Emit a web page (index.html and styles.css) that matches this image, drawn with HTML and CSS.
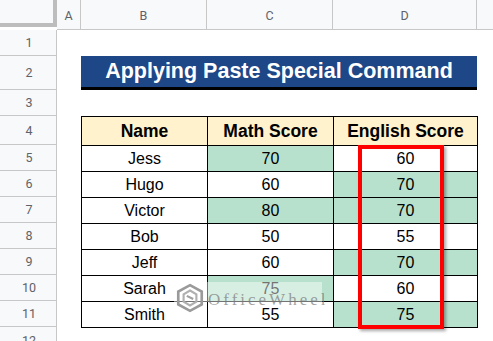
FILE: index.html
```html
<!DOCTYPE html>
<html>
<head>
<meta charset="utf-8">
<link rel="stylesheet" href="styles.css">
</head>
<body>
<div class="sheet">
  <div class="corner"></div>
  <div class="colh">A</div>
  <div class="colh">B</div>
  <div class="colh">C</div>
  <div class="colh">D</div>
  <div class="colh last"></div>

  <div class="rowh r1">1</div>
  <div class="rowh r2">2</div>
  <div class="rowh r3">3</div>
  <div class="rowh r4">4</div>
  <div class="rowh r5">5</div>
  <div class="rowh r6">6</div>
  <div class="rowh r7">7</div>
  <div class="rowh r8">8</div>
  <div class="rowh r9">9</div>
  <div class="rowh r10">10</div>
  <div class="rowh r11">11</div>
  <div class="rowh r12">12</div>

  <div class="title">Applying Paste Special Command</div>

  <div class="tablewrap">
    <table class="data">
      <colgroup><col class="cb"><col class="cc"><col class="cd"></colgroup>
      <tr class="head"><th>Name</th><th>Math Score</th><th>English Score</th></tr>
      <tr><td>Jess</td><td class="g">70</td><td>60</td></tr>
      <tr><td>Hugo</td><td>60</td><td class="g">70</td></tr>
      <tr><td>Victor</td><td class="g">80</td><td class="g">70</td></tr>
      <tr><td>Bob</td><td>50</td><td>55</td></tr>
      <tr><td>Jeff</td><td>60</td><td class="g">70</td></tr>
      <tr><td>Sarah</td><td class="g">75</td><td>60</td></tr>
      <tr><td>Smith</td><td>55</td><td class="g">75</td></tr>
    </table>
    <div class="highlight"></div>
    <div class="watermark">
      <svg class="logo" width="32" height="30" viewBox="0 0 30 28">
        <path d="M15 2 L26 8 L26 20 L15 26 L4 20 L4 8 Z" fill="none" stroke="#9a9a9a" stroke-width="2.5"/>
        <path d="M15 7 L21 10.5 L21 17.5 L15 21 L9 17.5 L9 10.5 Z" fill="none" stroke="#b0b0b0" stroke-width="2"/>
        <path d="M12 12 L18 15" stroke="#a0a0a0" stroke-width="2"/>
      </svg>
      <span class="wmtext">OfficeWheel</span>
    </div>
  </div>
</div>
</body>
</html>
```

FILE: styles.css
```css
html, body {
  margin: 0;
  padding: 0;
  background: #ffffff;
}
.sheet {
  width: 493px;
  height: 341px;
  overflow: hidden;
  display: grid;
  grid-template-columns: 57px 24px 126px 126px 144px 1fr;
  grid-template-rows: 30px 26px 34px 26px 29px 26px 26px 26px 26px 26px 26px 26px 1fr;
  font-family: "Liberation Sans", Arial, sans-serif;
}
.corner {
  background: #f8f9fa;
  border-right: 4px solid #bdbdbd;
  border-bottom: 4px solid #bdbdbd;
  box-sizing: border-box;
  height: 27px;
  width: 57px;
}
.colh {
  background: #f8f9fa;
  border-right: 1px solid #c7c7c7;
  border-bottom: 1px solid #c7c7c7;
  color: #5f6368;
  font-family: Roboto, "Liberation Sans", sans-serif;
  font-size: 12.5px;
  display: flex;
  align-items: center;
  justify-content: center;
  padding-top: 1px;
  box-sizing: border-box;
}
.colh.last { border-right: none; }
.rowh {
  grid-column: 1;
  background: #f8f9fa;
  border-right: 1px solid #c7c7c7;
  border-bottom: 1px solid #c7c7c7;
  color: #5f6368;
  font-family: Roboto, "Liberation Sans", sans-serif;
  font-size: 12.5px;
  display: flex;
  align-items: center;
  justify-content: center;
  padding-left: 2px;
  box-sizing: border-box;
}
.r1 { grid-row: 2; }
.r2 { grid-row: 3; }
.r3 { grid-row: 4; }
.r4 { grid-row: 5; }
.r5 { grid-row: 6; }
.r6 { grid-row: 7; }
.r7 { grid-row: 8; }
.r8 { grid-row: 9; }
.r9 { grid-row: 10; }
.r10 { grid-row: 11; }
.r11 { grid-row: 12; }
.r12 { grid-row: 13; border-bottom: none; align-items: flex-start; padding-top: 6px; }

.title {
  grid-column: 3 / 6;
  grid-row: 3;
  background: #1d4787;
  border-bottom: 3px solid #000;
  color: #ffffff;
  font-weight: bold;
  font-size: 21.5px;
  display: flex;
  align-items: center;
  justify-content: center;
  box-sizing: border-box;
  padding-bottom: 1px;
}

.tablewrap {
  grid-column: 3 / 6;
  grid-row: 5 / 13;
  position: relative;
}
.data {
  border-collapse: collapse;
  table-layout: fixed;
  width: 396px;
  font-size: 16px;
  color: #000;
}
.cb { width: 126px; }
.cc { width: 126px; }
.cd { width: 144px; }
.data th, .data td {
  border: 1px solid #000;
  text-align: center;
  padding: 0;
  box-sizing: border-box;
}
.data tr.head th {
  background: #fff2cc;
  font-weight: bold;
  font-size: 17.5px;
  height: 29px;
}
.data td { height: 26px; padding-top: 1px; }
.data td.g { background: #b7e1cd; }

.highlight {
  position: absolute;
  left: 277px;
  top: 29px;
  width: 86px;
  height: 184px;
  border: 4px solid #ff0000;
  box-sizing: border-box;
  box-shadow: 2px 2px 3px rgba(0, 0, 0, 0.35);
}

.watermark {
  position: absolute;
  left: 93px;
  top: 166px;
  width: 148px;
  height: 20px;
  background: rgba(255, 255, 255, 0.45);
}
.logo {
  position: absolute;
  left: 0px;
  top: 1px;
}
.wmtext {
  position: absolute;
  left: 34px;
  top: 9px;
  font-family: "Liberation Serif", serif;
  font-size: 17px;
  letter-spacing: 3px;
  color: rgba(120, 120, 120, 0.7);
  line-height: 18px;
}
```
